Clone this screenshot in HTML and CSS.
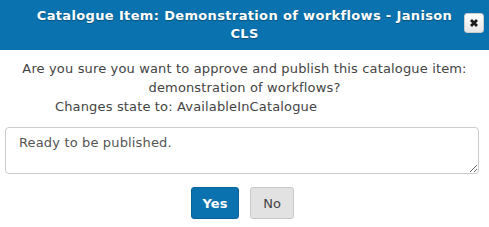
FILE: index.html
```html
<!DOCTYPE html>
<html>
<head>
<meta charset="utf-8">
<link rel="stylesheet" href="styles.css">
</head>
<body>
<div class="dialog">
  <div class="header">
    <div class="title">Catalogue Item: Demonstration of workflows - Janison CLS</div>
    <button class="close" aria-label="Close">
      <svg width="10" height="10" viewBox="0 0 10 10"><path d="M2 2 L8 8 M8 2 L2 8" stroke="#1a1a1a" stroke-width="2.8" stroke-linecap="butt"/></svg>
    </button>
  </div>
  <div class="body">
    <p class="question">Are you sure you want to approve and publish this catalogue item: demonstration of workflows?</p>
    <p class="state">Changes state to: AvailableInCatalogue</p>
    <textarea class="comment">Ready to be published.</textarea>
    <div class="actions">
      <button class="btn btn-yes">Yes</button>
      <button class="btn btn-no">No</button>
    </div>
  </div>
</div>
</body>
</html>
```
FILE: styles.css
```css
html, body { margin: 0; padding: 0; background: #fff; }
body { font-family: "DejaVu Sans", Verdana, sans-serif; font-size: 13px; color: #444; letter-spacing: 0.15px; }
.dialog { width: 489px; height: 227px; }
.header {
  background: #0a72ae;
  height: 50px;
  display: flex;
  align-items: center;
  justify-content: center;
  position: relative;
  box-sizing: border-box;
}
.title {
  color: #fff;
  font-weight: bold;
  font-size: 13px;
  letter-spacing: 0.35px;
  text-align: center;
  width: 430px;
  line-height: 18px;
  text-shadow: 0 1px 1px rgba(0,0,0,0.3);
}
.close {
  position: absolute;
  right: 5px;
  top: 13px;
  width: 20px;
  height: 20px;
  border: 1px solid #ccc;
  border-radius: 3px;
  background: linear-gradient(#fff, #e6e6e6);
  padding: 0;
  display: flex;
  align-items: center;
  justify-content: center;
}
.body { padding: 9px 5px 0 5px; }
.question { margin: 0; text-align: center; line-height: 19px; padding: 0 8px; }
.state { margin: 0 0 11px 0; padding-left: 50px; line-height: 19px; }
.comment {
  display: block;
  box-sizing: border-box;
  width: 474px;
  height: 47px;
  margin: 0;
  border: 1px solid #ccc;
  border-radius: 4px;
  padding: 7px 13px;
  font-family: "DejaVu Sans", Verdana, sans-serif;
  font-size: 13px;
  letter-spacing: 0.15px;
  color: #555;
  resize: vertical;
}
.actions { display: flex; justify-content: center; gap: 11px; margin-top: 13px; padding-right: 4px; }
.btn {
  font-family: "DejaVu Sans", Verdana, sans-serif;
  font-size: 13px;
  height: 32px;
  border-radius: 3px;
  border: 1px solid;
  padding: 0;
}
.btn-yes { background: #0a72ae; border-color: #08639a; color: #fff; font-weight: bold; width: 48px; }
.btn-no { background: #e2e2e2; border-color: #c8c8c8; color: #444; width: 44px; }
```
